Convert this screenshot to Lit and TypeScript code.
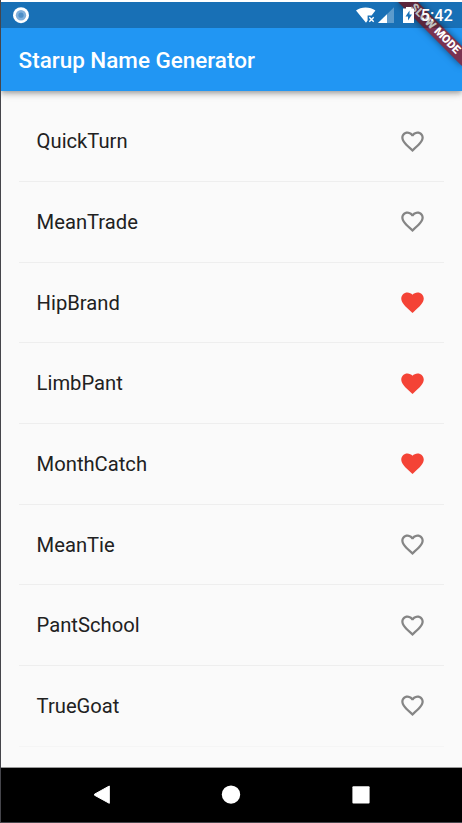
import { LitElement, html, css, svg } from "lit";
import { customElement, property } from "lit/decorators.js";

const HEART =
  "M12 21.35l-1.45-1.32C5.4 15.36 2 12.28 2 8.5 2 5.42 4.42 3 7.5 3c1.74 0 3.41.81 4.5 2.09C13.09 3.81 14.76 3 16.5 3 19.58 3 22 5.42 22 8.5c0 3.78-3.4 6.86-8.55 11.54L12 21.35z";
const HEART_OUTLINE =
  "M16.5 3c-1.74 0-3.41.81-4.5 2.09C10.91 3.81 9.24 3 7.5 3 4.42 3 2 5.42 2 8.5c0 3.78 3.4 6.86 8.55 11.54L12 21.35l1.45-1.32C18.6 15.36 22 12.28 22 8.5 22 5.42 19.58 3 16.5 3zm-4.4 15.55l-.1.1-.1-.1C7.14 14.24 4 11.39 4 8.5 4 6.5 5.5 5 7.5 5c1.54 0 3.04.99 3.57 2.36h1.87C13.46 5.99 14.96 5 16.5 5c2 0 3.5 1.5 3.5 3.5 0 2.89-3.14 5.74-7.9 10.05z";

@customElement("name-row")
class NameRow extends LitElement {
  @property() name = "";
  @property({ type: Boolean }) saved = false;
  static styles = css`
    :host {
      display: flex;
      align-items: center;
      justify-content: space-between;
      box-sizing: border-box;
      height: 80.7px;
      padding: 0 18px;
      border-bottom: 1px solid #eeeeee;
      font-size: 20.2px;
      color: #212121;
    }
    :host(:last-child) { border-color: #f5f5f5; }
    span { margin-left: -0.4px; }
    svg { width: 27px; height: 27px; fill: #858585; }
    .saved { fill: #f44336; }
  `;
  render() {
    return html`<span>${this.name}</span>
      <svg class=${this.saved ? "saved" : ""} viewBox="0 0 24 24">
        ${svg`<path d=${this.saved ? HEART : HEART_OUTLINE}></path>`}
      </svg>`;
  }
}

@customElement("app-root")
class AppRoot extends LitElement {
  static styles = css`
    :host {
      display: block;
      box-sizing: border-box;
      width: 462px;
      height: 823px;
      padding-top: 2px;
      border-left: 1px solid #45454b;
      border-bottom: 1px solid #45454b;
      background: #fff;
      font-family: Roboto, sans-serif;
      overflow: hidden;
    }
    .screen {
      position: relative;
      display: flex;
      flex-direction: column;
      height: 820px;
      overflow: hidden;
      background: #fafafa;
    }
    .status {
      position: relative;
      z-index: 3;
      flex: none;
      height: 26.4px;
      background: rgba(0, 0, 0, 0.25);
    }
    .status svg { display: block; width: 461px; height: 27px; }
    .status text { font: 500 16.3px Roboto, sans-serif; fill: #fff; }
    header {
      position: relative;
      z-index: 1;
      flex: none;
      box-sizing: border-box;
      height: 89px;
      margin-top: -26.4px;
      padding: 27px 17.6px 0;
      display: flex;
      align-items: center;
      background: #2196f3;
      color: #fff;
      font-size: 22.45px;
      font-weight: 500;
      box-shadow: 0 2px 4px -1px rgba(0,0,0,.2), 0 4px 5px rgba(0,0,0,.14), 0 1px 10px rgba(0,0,0,.12);
    }
    .banner {
      position: absolute;
      z-index: 2;
      top: 20.3px;
      right: -18.2px;
      width: 90px;
      height: 13.5px;
      transform: rotate(45deg);
      background: #7a3351;
      box-shadow: 0 0 7px rgba(0, 0, 0, 0.5);
      color: #fff;
      font-size: 11.45px;
      font-weight: 900;
      line-height: 13.5px;
      text-align: center;
      white-space: nowrap;
    }
    main { flex: 1; padding: 10.3px 18px 0; overflow: hidden; }
    nav { flex: none; height: 54px; background: #000; border-top: 1px solid #999; }
    nav svg { display: block; width: 461px; height: 54px; fill: #fff; }
  `;
  names: [string, boolean][] = [
    ["QuickTurn", false], ["MeanTrade", false], ["HipBrand", true], ["LimbPant", true],
    ["MonthCatch", true], ["MeanTie", false], ["PantSchool", false], ["TrueGoat", false],
  ];
  render() {
    return html`<div class="screen">
      <div class="status">
        <svg viewBox="1 2 461 27">
          <circle cx="21" cy="15.2" r="8" fill="#fff" />
          <circle cx="21" cy="15.2" r="5.2" fill="#7fb0dc" />
          <circle cx="21" cy="15.2" r="2.6" fill="#4d8fc8" />
          <path d="M356 10.6C361 6.4 370.2 6.4 375.4 10.6L371.6 15.6H367.6V20.6L366 22.8Z" fill="#fff" />
          <path d="M369.3 17.2L373.7 21.8M373.7 17.2L369.3 21.8" stroke="#fff" stroke-width="1.4" />
          <path d="M394 7.3V23H378Z" fill="#fff" opacity=".3" />
          <path d="M387 14.2V23H378Z" fill="#fff" />
          <path d="M403 8.5H406V7H411V8.5H414V23H403Z" fill="#fff" />
          <path d="M409.5 10.5L405.5 16.5H408V20.5L412 14.5H409.5Z" fill="#1970b6" />
          <text x="420.8" y="21.3">5:42</text>
        </svg>
      </div>
      <header>Starup Name Generator</header>
      <div class="banner">SLOW MODE</div>
      <main>
        ${this.names.map(([n, s]) => html`<name-row .name=${n} .saved=${s}></name-row>`)}
      </main>
      <nav>
        <svg viewBox="1 768 461 54">
          <path d="M109.3 786V803.3L94.5 795.2V794.2Z" stroke="#fff" stroke-width="1" stroke-linejoin="round" />
          <circle cx="231" cy="794.6" r="9.2" />
          <rect x="352.4" y="786.2" width="17.2" height="17.2" rx="1" />
        </svg>
      </nav>
    </div>`;
  }
}
